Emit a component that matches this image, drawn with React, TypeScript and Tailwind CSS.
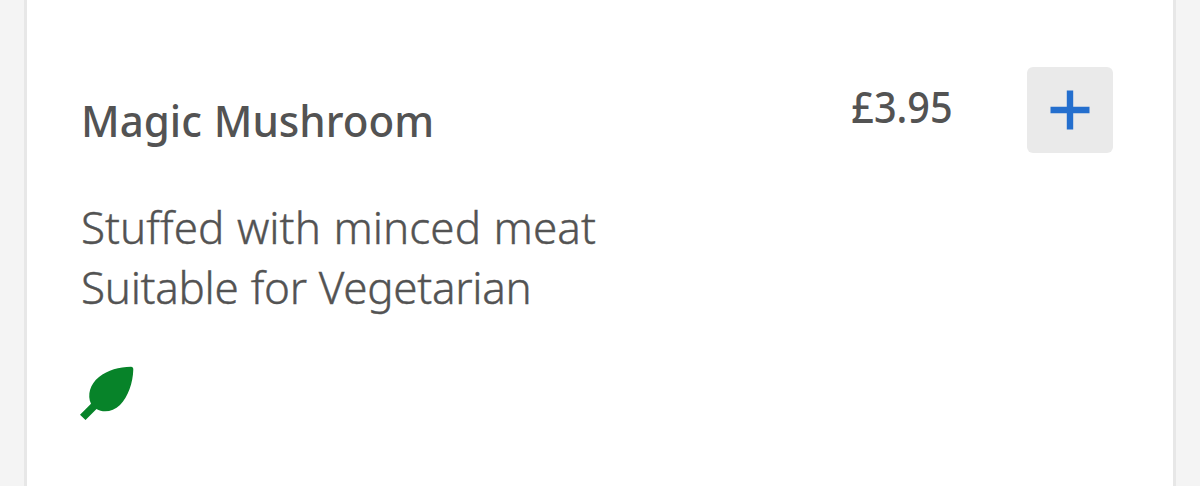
type MenuItem = {
  name: string;
  price: string;
  description: { text: string; className: string }[];
};

const item: MenuItem = {
  name: "Magic Mushroom",
  price: "£3.95",
  description: [
    { text: "Stuffed with minced meat", className: "tracking-[0.05px] [word-spacing:1px]" },
    { text: "Suitable for Vegetarian", className: "tracking-[-0.3px] [word-spacing:1px]" },
  ],
};

function LeafIcon() {
  return (
    <svg
      viewBox="0 0 54 54"
      className="-ml-px block h-[54px] w-[54px] fill-[#078329]"
      role="img"
      aria-label="Vegetarian"
    >
      <path d="M51 0.8Q53.3 0.8 53.3 3.5C53 17 48 31 40 39C33 46 23 47 16.5 43L5.5 54L0 48.8L11 37.8C7 29 10 18 19 11C28 4 39 1 51 0.8Z" />
    </svg>
  );
}

export default function App() {
  return (
    <main className="flex h-[486px] w-[1200px] justify-center overflow-hidden bg-[#f4f4f4] font-['Noto_Sans',sans-serif] text-[#535353]">
      <article className="flex w-[1152px] items-start justify-between border-x-[3px] border-[#e7e7e7] bg-white pl-[54px] pr-[60px]">
        <div className="pt-[90px]">
          <h2 className="h-[60px] origin-left scale-x-[0.957] whitespace-nowrap text-[44px] leading-[60px] font-medium [word-spacing:1px]">
            {item.name}
          </h2>
          <div className="mt-[47px] whitespace-nowrap text-[44px] leading-[60px] font-light [-webkit-text-stroke:0.4px_#535353] [font-variant-ligatures:none]">
            {item.description.map((line) => (
              <p key={line.text} className={line.className}>
                {line.text}
              </p>
            ))}
          </div>
          <div className="mt-[49px]">
            <LeafIcon />
          </div>
        </div>
        <div className="flex items-start gap-[74px] pt-[67px]">
          <span className="mt-[9px] origin-right scale-x-[0.9] text-[44px] leading-[60px] font-medium">
            {item.price}
          </span>
          <button
            aria-label={`Add ${item.name}`}
            className="flex h-[86px] w-[86px] items-center justify-center rounded-[6px] bg-[#eaeaea]"
          >
            <svg viewBox="0 0 40 40" className="h-[40px] w-[40px] fill-[#246fce]">
              <path d="M16.8 0.5h6.4v16.3h16.3v6.4H23.2v16.3h-6.4V23.2H0.5v-6.4h16.3z" />
            </svg>
          </button>
        </div>
      </article>
    </main>
  );
}
